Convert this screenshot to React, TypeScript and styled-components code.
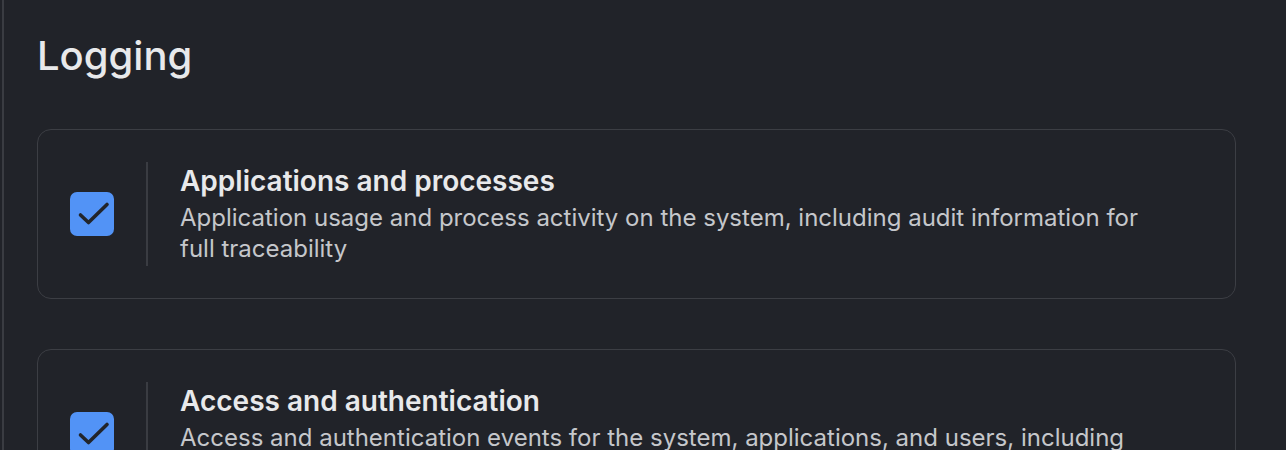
import * as React from 'react';
import styled, { createGlobalStyle } from 'styled-components';

const GlobalStyle = createGlobalStyle`
  html, body {
    margin: 0;
    padding: 0;
    background: #212329;
  }
  body {
    font-family: Inter, "Noto Sans", sans-serif;
    -webkit-font-smoothing: antialiased;
  }
`;

type LogOption = {
  id: string;
  title: string;
  description: string;
  checked: boolean;
};

const options: LogOption[] = [
  {
    id: 'apps',
    title: 'Applications and processes',
    description:
      'Application usage and process activity on the system, including audit information for full traceability',
    checked: true,
  },
  {
    id: 'auth',
    title: 'Access and authentication',
    description:
      'Access and authentication events for the system, applications, and users, including login attempts and privilege changes',
    checked: true,
  },
];

const Page = styled.div`
  min-height: 450px;
  border-left: 2px solid #3a3c42;
  margin-left: 2px;
  padding: 30px 50px 40px 33px;
  box-sizing: border-box;
`;

const Heading = styled.h1`
  margin: 0 0 47px;
  font-size: 40px;
  line-height: 52px;
  font-weight: 500;
  color: #e8e9eb;
  letter-spacing: 0;
`;

const List = styled.div`
  display: flex;
  flex-direction: column;
  gap: 50px;
`;

const Card = styled.label`
  display: flex;
  align-items: center;
  padding: 32px 32px;
  border: 1.5px solid #3c3e44;
  border-radius: 14px;
  cursor: pointer;
`;

const BoxCell = styled.div`
  display: flex;
  align-items: center;
  justify-content: center;
  width: 44px;
  padding-right: 32px;
  align-self: stretch;
`;

const Box = styled.span<{ $checked: boolean }>`
  display: flex;
  align-items: center;
  justify-content: center;
  width: 44px;
  height: 44px;
  border-radius: 7px;
  background: ${(p) => (p.$checked ? '#5293f6' : 'transparent')};
  border: ${(p) => (p.$checked ? 'none' : '2px solid #6b6e75')};
  box-sizing: border-box;
`;

const Divider = styled.div`
  width: 2px;
  align-self: stretch;
  min-height: 104px;
  background: #3a3c42;
  margin-right: 32px;
`;

const Text = styled.div`
  display: flex;
  flex-direction: column;
  max-width: 980px;
`;

const Title = styled.div`
  font-size: 28px;
  line-height: 33px;
  font-weight: 600;
  color: #e8e9eb;
`;

const Description = styled.div`
  margin-top: 4px;
  font-size: 24px;
  line-height: 31px;
  color: #c5c7cb;
`;

function CheckMark() {
  return (
    <svg width="44" height="44" viewBox="0 0 44 44" fill="none">
      <polyline
        points="10.5,23 18.5,30.5 37,12.5"
        stroke="#22252b"
        strokeWidth="3.6"
        strokeLinecap="round"
        strokeLinejoin="round"
      />
    </svg>
  );
}

function OptionCard({ option }: { option: LogOption }) {
  return (
    <Card>
      <BoxCell>
        <Box $checked={option.checked}>{option.checked && <CheckMark />}</Box>
      </BoxCell>
      <Divider />
      <Text>
        <Title>{option.title}</Title>
        <Description>{option.description}</Description>
      </Text>
    </Card>
  );
}

export default function App() {
  return (
    <>
      <GlobalStyle />
      <Page>
        <Heading>Logging</Heading>
        <List>
          {options.map((o) => (
            <OptionCard key={o.id} option={o} />
          ))}
        </List>
      </Page>
    </>
  );
}
